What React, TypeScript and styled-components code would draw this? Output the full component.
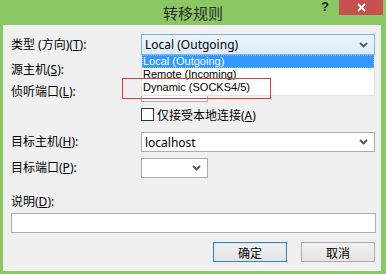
import React from 'react'
import styled, { createGlobalStyle } from 'styled-components'

const GlobalStyle = createGlobalStyle`
  html, body {
    margin: 0;
    padding: 0;
    background: #8bc763;
  }
  body {
    font-family: 'Noto Sans', 'Noto Sans CJK SC', sans-serif;
    font-size: 12px;
    color: #000;
  }
`

const cjk = `'Noto Sans CJK SC', 'Noto Sans', sans-serif`
const latin = `'Noto Sans', 'Noto Sans CJK SC', sans-serif`

const Window = styled.div`
  width: 386px;
  height: 274px;
  box-sizing: border-box;
  background: #8bc763;
  padding: 0 5px 3px 3px;
  display: flex;
  flex-direction: column;
  overflow: hidden;
`

const TitleBar = styled.div`
  position: relative;
  height: 25px;
  flex: none;
  margin: 0 -5px 0 -3px;
  display: flex;
  align-items: center;
  justify-content: center;
`

const Title = styled.div`
  font-family: ${cjk};
  font-size: 15px;
  line-height: 25px;
  color: #2b2b2b;
  margin-top: -1px;
`

const HelpButton = styled.div`
  position: absolute;
  left: 320px;
  top: 0;
  width: 10px;
  height: 14px;
  font-family: 'Liberation Sans', sans-serif;
  font-weight: bold;
  font-size: 13px;
  line-height: 13px;
  color: #1e2a1a;
  text-align: center;
`

const CloseButton = styled.div`
  position: absolute;
  left: 339px;
  top: 0;
  width: 44px;
  height: 15px;
  background: #c75050;
  display: flex;
  align-items: center;
  justify-content: center;
`

const Client = styled.div`
  position: relative;
  flex: 1;
  background: #f0f0f0;
  padding: 9px 0 0 8px;
  display: flex;
  flex-direction: column;
`

const Row = styled.div<{ $top: number; $h: number }>`
  display: flex;
  align-items: center;
  margin-top: ${p => p.$top}px;
  height: ${p => p.$h}px;
`

const Label = styled.div`
  width: 130px;
  flex: none;
  font-family: ${latin};
  font-size: 12px;
  line-height: 14px;
  color: #000;
  u {
    text-decoration: underline;
    text-underline-offset: 1px;
  }
`

const Combo = styled.div<{ $w: number; $active?: boolean }>`
  position: relative;
  box-sizing: border-box;
  width: ${p => p.$w}px;
  height: 100%;
  border: 1px solid ${p => (p.$active ? '#7eb4ea' : '#acacac')};
  background: ${p => (p.$active ? 'linear-gradient(#ecf4fc, #dcecfc)' : '#fff')};
  display: flex;
  align-items: center;
  padding-left: 3px;
  font-family: ${latin};
  font-size: 12px;
  color: #000;
`

const Arrow = styled.svg`
  position: absolute;
  right: 6px;
  top: 50%;
  margin-top: -3px;
`

const TextBox = styled.div<{ $w: number }>`
  box-sizing: border-box;
  width: ${p => p.$w}px;
  height: 100%;
  border: 1px solid #abadb3;
  background: #fff;
`

const CheckRow = styled.label`
  display: flex;
  align-items: center;
  gap: 3px;
  font-family: ${latin};
  font-size: 12px;
  margin-left: 130px;
  u {
    text-decoration: underline;
    text-underline-offset: 1px;
  }
`

const CheckBox = styled.span`
  box-sizing: border-box;
  width: 13px;
  height: 13px;
  border: 1px solid #333;
  background: #fff;
`

const ButtonBar = styled.div`
  display: flex;
  justify-content: flex-end;
  gap: 14px;
  padding-right: 6px;
  height: 20px;
  margin-top: 9px;
`

const Button = styled.div<{ $default?: boolean }>`
  box-sizing: border-box;
  width: 74px;
  height: 20px;
  border: 1px solid ${p => (p.$default ? '#3c7fb1' : '#acacac')};
  background: linear-gradient(#f0f0f0, #e5e5e5);
  box-shadow: ${p => (p.$default ? 'inset 0 0 0 1px #d8e8f5' : 'none')};
  display: flex;
  align-items: center;
  justify-content: center;
  font-family: ${cjk};
  font-size: 12px;
`

const DropList = styled.div`
  position: absolute;
  left: 138px;
  top: 30px;
  width: 234px;
  box-sizing: border-box;
  background: #fff;
  border: 1px solid #e3e3e3;
  border-top: none;
  padding-bottom: 1px;
  font-family: 'Liberation Sans', sans-serif;
  font-size: 11px;
`

const DropItem = styled.div<{ $selected?: boolean }>`
  height: 13px;
  line-height: 13px;
  padding-left: 1px;
  color: ${p => (p.$selected ? '#fff' : '#000')};
  background: ${p => (p.$selected ? '#3399ff' : 'transparent')};
  outline: ${p => (p.$selected ? '1px dotted #8ab4e6' : 'none')};
  outline-offset: -1px;
  white-space: nowrap;
`

const Annotation = styled.div`
  position: absolute;
  left: 119px;
  top: 53px;
  width: 149px;
  height: 21px;
  box-sizing: border-box;
  border: 1px solid #e0393e;
  pointer-events: none;
`

function Chevron() {
  return (
    <Arrow width="9" height="6" viewBox="0 0 9 6">
      <path d="M1 1 L4.5 4.5 L8 1" fill="none" stroke="#555" strokeWidth="1.8" />
    </Arrow>
  )
}

const options = ['Local (Outgoing)', 'Remote (Incoming)', 'Dynamic (SOCKS4/5)']

export default function App() {
  return (
    <>
      <GlobalStyle />
      <Window>
        <TitleBar>
          <Title>转移规则</Title>
          <HelpButton>?</HelpButton>
          <CloseButton>
            <svg width="9" height="9" viewBox="0 0 9 9">
              <path d="M1 1 L8 8 M8 1 L1 8" stroke="#fff" strokeWidth="1.8" />
            </svg>
          </CloseButton>
        </TitleBar>
        <Client>
          <Row $top={0} $h={21}>
            <Label>类型 (方向)(<u>T</u>):</Label>
            <Combo $w={234} $active>
              Local (Outgoing)
              <Chevron />
            </Combo>
          </Row>
          <Row $top={4} $h={21}>
            <Label>源主机(<u>S</u>):</Label>
            <Combo $w={234}>
              <Chevron />
            </Combo>
          </Row>
          <Row $top={1} $h={21}>
            <Label>侦听端口(<u>L</u>):</Label>
            <TextBox $w={67} />
          </Row>
          <Row $top={5} $h={15}>
            <CheckRow>
              <CheckBox />
              <span>仅接受本地连接(<u>A</u>)</span>
            </CheckRow>
          </Row>
          <Row $top={10} $h={20}>
            <Label>目标主机(<u>H</u>):</Label>
            <Combo $w={234}>
              localhost
              <Chevron />
            </Combo>
          </Row>
          <Row $top={6} $h={20}>
            <Label>目标端口(<u>P</u>):</Label>
            <Combo $w={67}>
              <Chevron />
            </Combo>
          </Row>
          <Row $top={17} $h={14}>
            <Label>说明(<u>D</u>):</Label>
          </Row>
          <Row $top={4} $h={20}>
            <TextBox $w={365} />
          </Row>
          <ButtonBar>
            <Button $default>确定</Button>
            <Button>取消</Button>
          </ButtonBar>

          <DropList>
            {options.map((o, i) => (
              <DropItem key={o} $selected={i === 0}>
                {o}
              </DropItem>
            ))}
          </DropList>
          <Annotation />
        </Client>
      </Window>
    </>
  )
}
